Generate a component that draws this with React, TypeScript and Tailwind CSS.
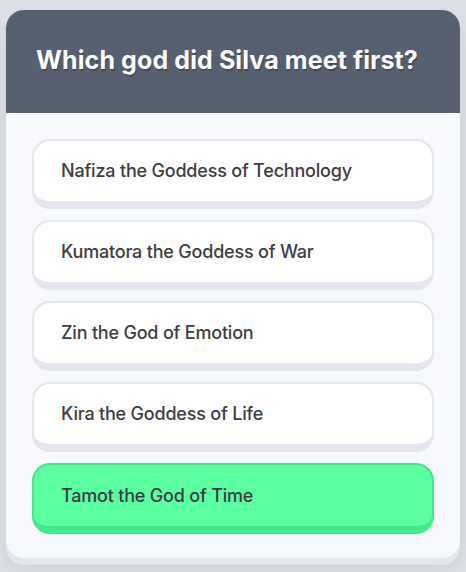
import React from "react";

const options = [
  { label: "Nafiza the Goddess of Technology", correct: false },
  { label: "Kumatora the Goddess of War", correct: false },
  { label: "Zin the God of Emotion", correct: false },
  { label: "Kira the Goddess of Life", correct: false },
  { label: "Tamot the God of Time", correct: true },
];

export default function App() {
  return (
    <div
      className="w-[466px] h-[572px] bg-[#dde1e7] pt-[10px] px-[6px] overflow-hidden"
      style={{ fontFamily: "Inter, 'Noto Sans', sans-serif" }}
    >
      <div className="rounded-[18px] overflow-hidden bg-[#f8f9fd] shadow-[0_7px_0_#e3e6ed,0_10px_18px_rgba(60,70,90,0.12)]">
        <div className="h-[103px] bg-[#576070] flex items-center pl-[30px] pb-[2px]">
          <h1 className="text-white text-[25px] font-bold tracking-[0.1px] [text-shadow:1px_2px_0_rgba(0,0,0,0.22)]">
            Which god did Silva meet first?
          </h1>
        </div>
        <div className="flex flex-col gap-[11px] px-[26px] pt-[26px] pb-[24px]">
          {options.map((o) =>
            o.correct ? (
              <div
                key={o.label}
                className="h-[71px] rounded-[18px] border-2 border-b-[8px] border-[#45e88c] bg-[#5aff9f] flex items-center pl-[27px] pb-[1px]"
              >
                <span className="text-[18px] font-medium text-[#3d3d42] tracking-[-0.2px]">
                  {o.label}
                </span>
              </div>
            ) : (
              <div
                key={o.label}
                className="h-[70px] rounded-[18px] border-2 border-b-[8px] border-[#e4e7ee] bg-white flex items-center pl-[27px] pb-[1px]"
              >
                <span className="text-[18px] font-medium text-[#3d3d42] tracking-[-0.2px]">
                  {o.label}
                </span>
              </div>
            )
          )}
        </div>
      </div>
    </div>
  );
}
